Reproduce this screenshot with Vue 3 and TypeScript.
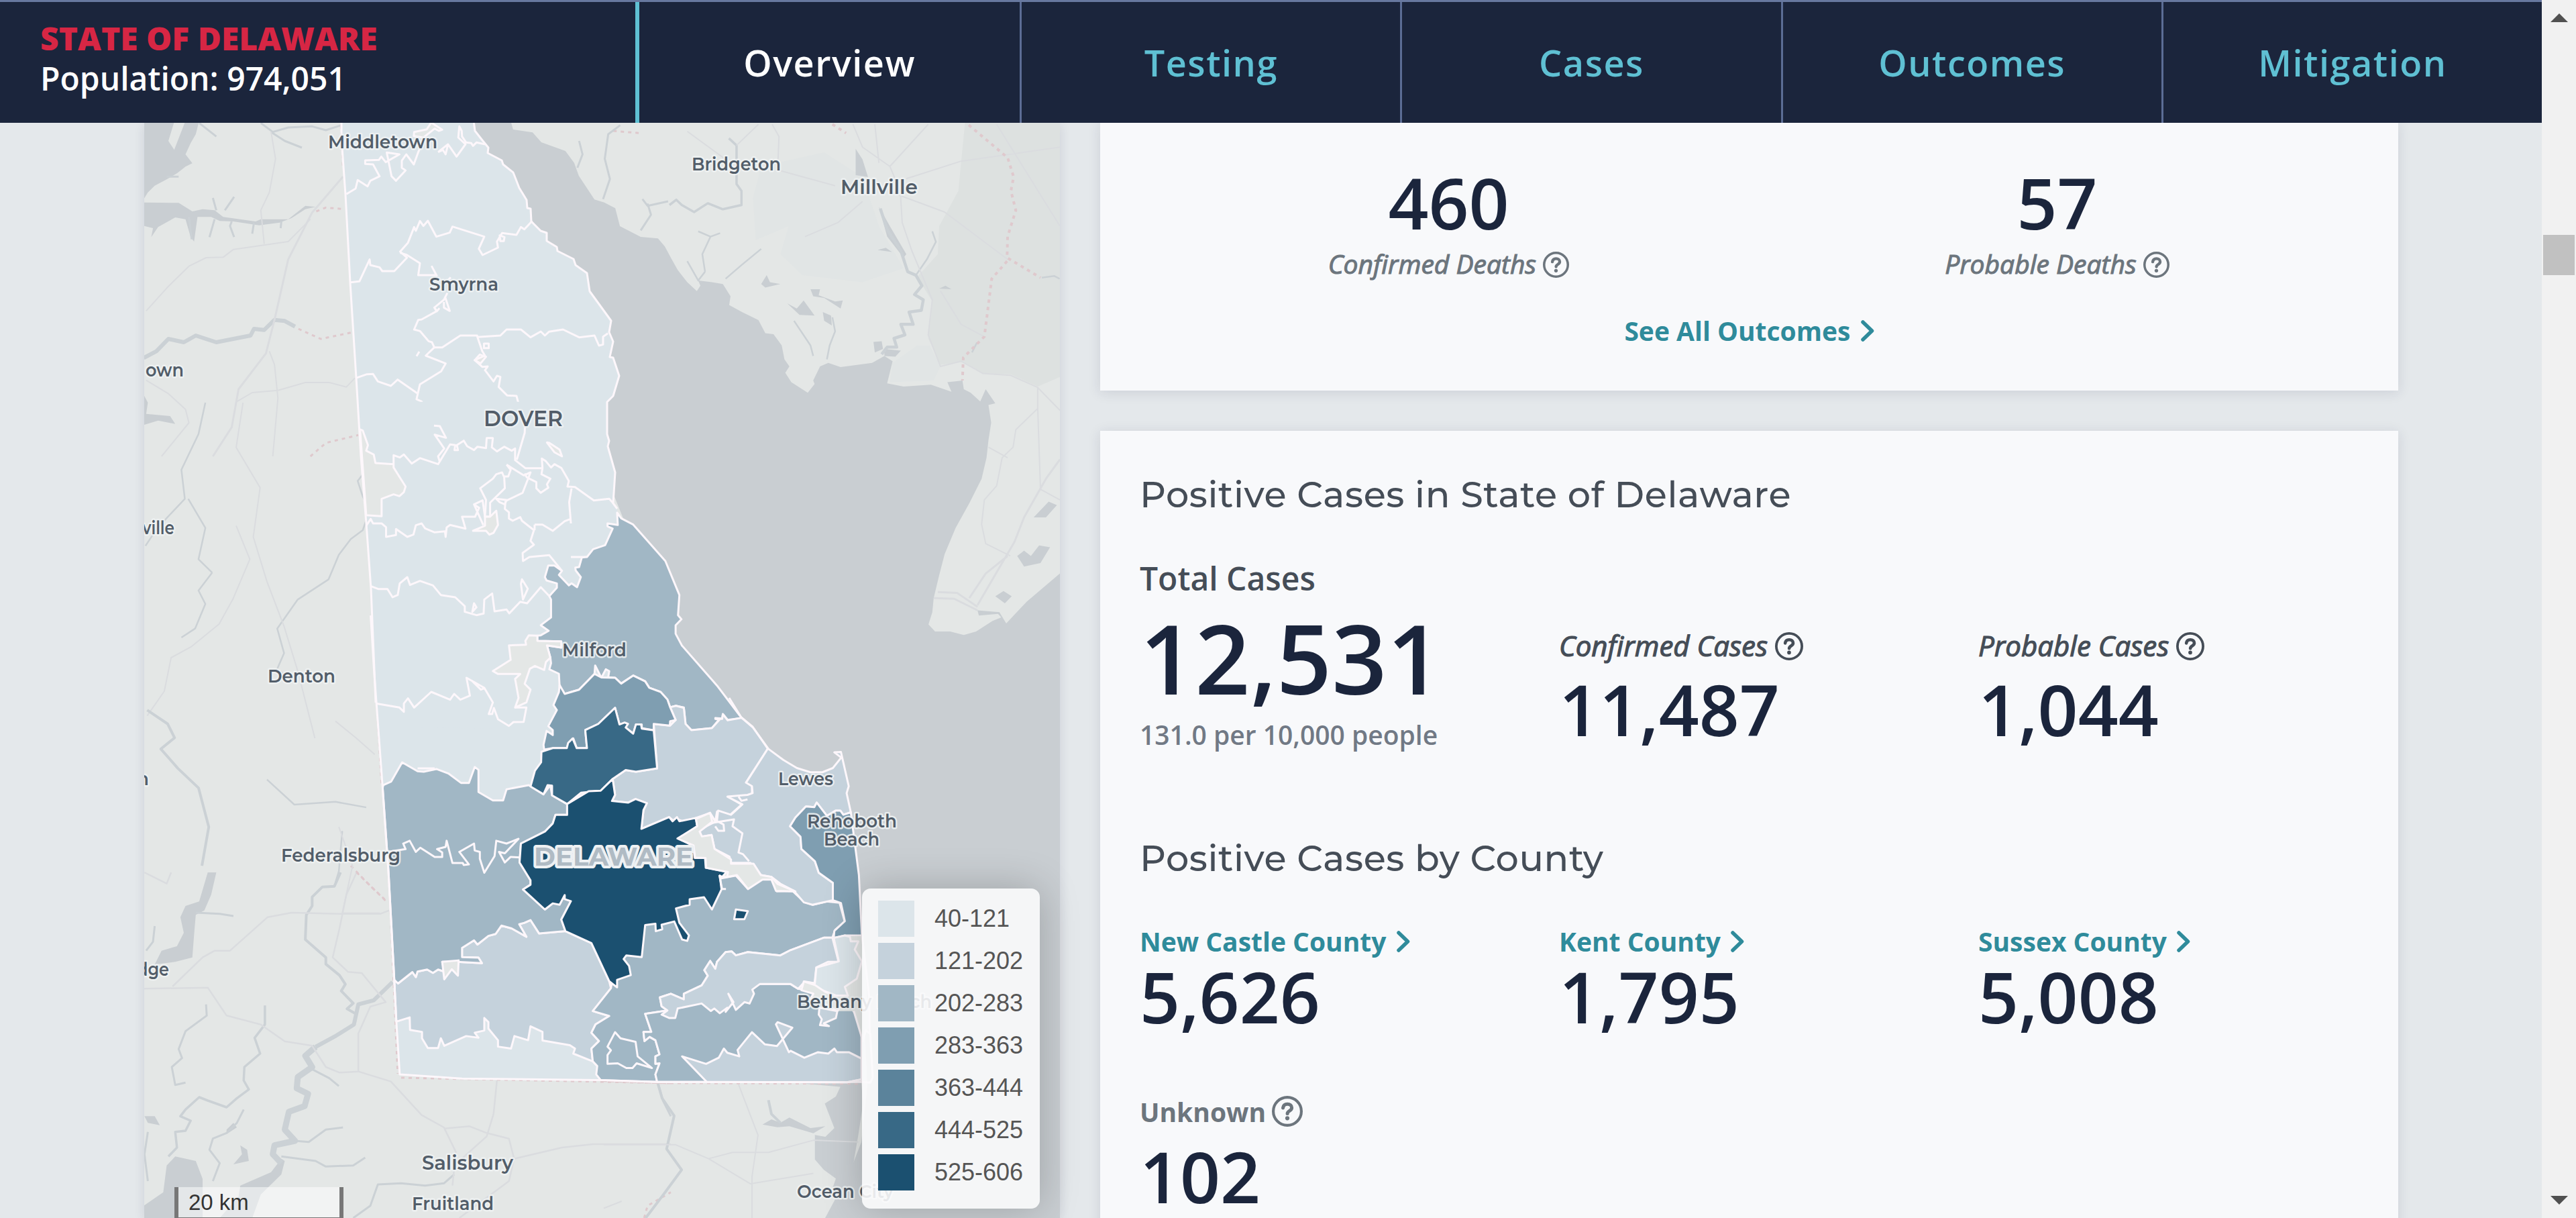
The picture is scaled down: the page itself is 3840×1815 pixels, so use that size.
<script setup lang="ts">
interface Shape { d: string; fill?: string; line?: boolean }
interface Sheet { frame: string; shapes: Shape[] }
interface Label { text: string; x: number; y: number; w?: number; size: number; kind?: string; end?: boolean }
interface Way { d: string; w: number; kind: string }

const tabs = ['Overview', 'Testing', 'Cases', 'Outcomes', 'Mitigation']

const scale = ['#dce5ea', '#c5d2dc', '#a1b7c5', '#7f9eb1', '#5b839b', '#386986', '#1b5070']
const [c1, c2, c3, c4, , c6, c7] = scale
const land = '#e4e7e6'
const ranges = ['40-121', '121-202', '202-283', '283-363', '363-444', '444-525', '525-606']
const legend = ranges.map((label, i) => ({ label, color: scale[i] }))

const counties = [
  { name: 'New Castle County', value: '5,626' },
  { name: 'Kent County', value: '1,795' },
  { name: 'Sussex County', value: '5,008' },
]

// Each map sheet is digitised on its own grid and placed with one transform.
const north = 'translate(200 180) scale(.510204 .333333)'
const central = 'translate(500 600) scale(.510204 .333333)'
const south = 'translate(500 1000) scale(.510204 .414541)'
const coast = 'translate(900 1000) scale(.446429 .519770)'
const west = 'translate(200 1300) scale(.510204 .333333)'
const jersey = 'translate(1000 180) scale(.408163 .522959)'

const water: Sheet[] = [
  { frame: north, shapes: [
    { d: 'M28 0L118 0 100 90 117 130 150 0 190 0 180 60 165 100 150 150 170 190 150 205 125 235 95 262 60 290 40 320 28 350ZM28 365L130 367 170 405 200 395 235 400 260 430 355 450 370 440 450 440 500 380 530 385 500 395 460 435 425 455 365 467 290 450 250 448 225 430 185 430 175 540 165 520 150 440 120 432 70 475 50 520 55 480 28 470Z' },
    { d: 'M28 1225L40 1260 35 1310 105 1320 120 1355 70 1340 28 1360Z' },
  ] },
  { frame: west, shapes: [
    { d: 'M215 0L240 0 225 100 205 170 180 190 175 280 170 380 120 400 60 412 80 350 125 330 145 270 135 200 150 150 190 130Z' },
    { d: 'M120 1270L180 1290 200 1370 200 1545 28 1545 28 1490 85 1430 95 1310Z' },
    { d: 'M310 1400L400 1340 430 1280 440 1290 430 1350 370 1440 345 1545 250 1545 305 1450Z' },
    { d: 'M270 1150L290 1120 300 1140 270 1170ZM310 1220L330 1240 335 1290 290 1305 315 1260ZM30 1090L60 1090 75 1130 40 1120Z' },
  ] },
  { frame: coast, shapes: [
    { d: 'M655 1182L790 1192 775 1220 738 1240 770 1310 740 1335 705 1330 705 1400 735 1430 775 1455 765 1480 790 1510 830 1430 850 1330 866 1240 860 1180Z' },
    { d: 'M530 1300L560 1285 590 1295 620 1280 690 1310 740 1305 700 1325 620 1305 580 1308Z' },
  ] },
  { frame: jersey, shapes: [
    { d: 'M675 80L700 110 720 160 675 155ZM760 245L800 300 860 380 850 390 790 330ZM330 465L350 440 362 460 400 465 345 475ZM425 520L460 535 485 512 525 555 470 553ZM510 480L545 480 540 497 600 515 628 512 620 535 560 505 520 500ZM555 545L585 555 588 583 560 570ZM740 630L770 628 775 650 745 660ZM780 650L840 655 820 672 780 670ZM755 368L785 362 808 374ZM980 478L1003 470 1025 480 1000 479ZM1325 1130L1380 1085 1410 1095 1370 1130ZM1265 1240L1290 1225 1315 1240 1345 1210 1385 1215 1350 1260 1290 1270ZM1185 1355L1215 1340 1245 1355 1220 1375Z' },
  ] },
]

const ways: { frame: string; items: Way[] }[] = [
  { frame: north, items: [
    { d: 'M28 1060L65 1030 100 975 145 990 180 960 240 990 340 960 350 930 380 935 410 890 440 895 470 920', w: 6, kind: 'river' },
    { d: 'M190 10L240 70M370 10L405 50 450 30 520 25 560 42 605 20M400 50L440 90 490 120M240 400L230 345M265 400L292 340M160 430L168 530M235 440L220 520M285 450L280 470 292 520M350 455L345 505M430 450L428 480M95 250L130 250', w: 3, kind: 'river' },
    { d: 'M610 250L520 410 450 620 410 890 385 1040 305 1200 285 1370 230 1500', w: 3, kind: 'road' },
    { d: 'M400 50L413 170 395 320 370 400 380 550M515 440L450 540 290 575 260 610 210 612 160 650 100 740 35 850M395 1030L410 1090 420 1240 405 1500M35 1160L100 1220 150 1290 160 1350 80 1500M300 1255L345 1215 420 1205 500 1170 570 1170 620 1190 645 1150', w: 2, kind: 'road' },
    { d: 'M532 405L560 388 615 395M480 930L545 975 640 945M515 1500L560 1440 655 1405M604 20L610 200M1400 45L1475 55', w: 3, kind: 'border' },
    { d: 'M1420 20L1385 60 1375 170 1390 260 1370 350M1300 90L1310 150 1295 210M1485 350L1500 380 1560 360M1480 490L1510 420 1500 370', w: 3, kind: 'river' },
  ] },
  { frame: central, items: [
    { d: 'M80 250L95 290 65 350 80 420 100 480 80 570 45 610 10 680 -20 790 -110 880 -170 1010 -150 1120 -170 1190 -120 1250', w: 2.5, kind: 'river' },
    { d: 'M-290 550L-250 700 -300 880 -340 990 -420 1090 -480 1140 -500 1290 -550 1400', w: 2, kind: 'road' },
    { d: 'M-380 0L-400 140 -450 300 -440 430 -520 560 -555 640M-430 430L-380 560 -400 700 -360 760M-360 760L-400 840 -380 900 -410 1010 -450 1050', w: 2.5, kind: 'river' },
    { d: 'M-270 0L-290 200 -220 380 -240 600 -200 800 -150 1000 -110 1200 -60 1500', w: 2, kind: 'road' },
  ] },
  { frame: south, items: [
    { d: 'M-550 140L-490 190 -470 240 -510 280 -460 350 -400 420 -370 560 -390 700', w: 4, kind: 'river' },
    { d: 'M20 575L10 720 0 760M-200 390L-120 480 0 470 90 490', w: 2.5, kind: 'river' },
    { d: 'M45 700L100 770 152 830M120 100L135 410', w: 3, kind: 'border' },
    { d: 'M0 180L60 240 115 300M20 870L130 870M20 870L50 700 10 560', w: 2, kind: 'road' },
  ] },
  { frame: west, items: [
    { d: 'M755 490L700 572 655 590 642 680 590 730 530 780', w: 6, kind: 'river' },
    { d: 'M530 780L500 820 520 870 478 915 475 965 508 990 498 1045 452 1070 440 1150 470 1200 410 1220 405 1260 430 1300', w: 9, kind: 'river' },
    { d: 'M603 0L585 62 550 65 520 110 520 150 503 190 500 300 560 380 560 410 600 460 617 500 605 530 640 585 622 610 645 630', w: 4, kind: 'river' },
    { d: 'M382 595L382 680 352 740 368 810 322 870 320 930 335 970 300 1010 270 1050 215 1020 190 1005 150 1060 135 1090 165 1110 150 1155 120 1160 125 1230 100 1270', w: 3.5, kind: 'river' },
    { d: 'M210 590L212 640 150 710 130 790 140 830 110 870 120 950 150 940M520 880L570 920 598 955M470 1200L510 1205 560 1150 610 1140M430 1270L530 1290 560 1315 640 1310 675 1275M640 1545L690 1490 712 1395 780 1390 850 1400 905 1390 935 1350M320 1060L300 1120 270 1165 230 1190 220 1240 250 1300 230 1380M180 180L250 185 290 195M60 240L55 310 35 350M40 1160L30 1260 40 1380M1530 940L1545 1020 1568 1090', w: 3, kind: 'river' },
    { d: 'M30 0L95 50 108 0M28 520L215 515 270 640 370 680 440 755 520 775 560 870 600 895 655 890 750 935 840 1085 905 1140 940 1250 930 1400M112 510L200 380 235 350 280 350 390 200 460 180 600 185 720 185 745 170M650 0L620 100 600 250 580 380 625 445 665 450 735 580 690 600 655 720 655 890M905 1145L980 1135 1030 1165 1095 1190 1110 1280 1095 1380 950 1545M1060 930L1050 1080 1030 1180 950 1290M1110 1280L1250 1230 1340 1215 1568 1215', w: 2.5, kind: 'road' },
    { d: 'M650 0L740 135M780 918L1568 942M1490 1545L1500 1490 1568 1430M745 40L770 900', w: 3, kind: 'border' },
  ] },
  { frame: coast, items: [
    { d: 'M180 1180L195 1225 235 1275 210 1370 260 1430 200 1500 140 1568M550 1230L560 1270 590 1295', w: 4, kind: 'river' },
    { d: 'M0 1358L240 1358 350 1398 490 1470 700 1440M450 1185L515 1330 495 1450 495 1568M350 1398L430 1380 550 1380 700 1345 850 1350M0 1540L60 1520', w: 2, kind: 'road' },
    { d: 'M0 1176L200 1182 860 1184', w: 2, kind: 'border' },
  ] },
  { frame: jersey, items: [
    { d: 'M765 250L790 310 840 370 865 430 895 440 917 470 890 495 922 510 915 540 870 545 885 580 840 580 855 610 815 620 825 645 790 645 770 665', w: 4.5, kind: 'river' },
    { d: 'M-5 240L20 225 40 240 85 260 135 235 190 252 258 240 258 200 240 180 240 70 212 50', w: 3.5, kind: 'river' },
    { d: 'M125 430L115 380 145 330 100 315M145 330L180 320M125 430L100 455 60 400M200 450L260 410 330 365M895 440L935 395 968 345 955 315M570 680L580 640 600 600 590 560M450 570L510 640 520 670M1100 660L1118 632M1355 447L1400 442 1420 450', w: 2.5, kind: 'river' },
    { d: 'M665 10L700 75 800 130 838 200 845 290 880 370M745 10L760 120M940 10L800 130M320 10L240 70M60 30L200 110M370 10L395 45 390 140 600 185M810 205L1000 260 1230 395M880 370L955 510 940 610 985 700 1060 685 1140 720 1240 725 1340 760 1340 820 1260 880 1250 930 1210 960 1190 1040 1145 1080 1135 1150 1150 1205 1240 1240M985 485L1060 580 1145 615M700 230L610 290 490 330M1190 10L1421 300M860 165L1060 115 1421 75M1340 760L1421 825M1340 820L1350 1050 1421 1080M1160 930L1230 960', w: 2, kind: 'road' },
    { d: 'M1421 965L1370 1020 1290 1130 1255 1200 1180 1300 1120 1380M975 1343L1045 1345 1120 1385M960 1360L1035 1362 1120 1395M1230 1240L1150 1290 1090 1360', w: 3, kind: 'road' },
    { d: 'M1088 12L1230 105 1252 160 1242 200 1260 255 1230 330 1228 390 1350 447M1228 400L1172 450 1145 615 1068 675 1065 740M590 10L640 35', w: 4, kind: 'border' },
  ] },
]

const forests = 'M1075 0L1421 0 1421 730 1340 757 1240 722 1140 720 1070 687 985 695 940 620 955 515 900 445 975 380 980 300 1050 200Z'
const marshes = 'M330 130L560 90 700 160 760 300 850 420 700 460 480 440 400 380 430 300 310 340 300 220ZM810 690L900 640 945 640 985 700 960 740 800 745Z'

const zips: Sheet[] = [
  { frame: north, shapes: [
    { fill: c1, d: 'M607 0L606 20 610 80 618 330 632 722 648 1150 664 1520 1392 1520 1383 1455 1387 1430 1382 1400 1382 1258 1399 1230 1417 1140 1399 1060 1390 1055 1400 988 1388 945 1394 895 1330 762 1323 680 1290 645 1283 618 1237 583 1235 565 1206 538 1204 500 1188 492 1163 448 1159 450 1158 393 1148 390 1147 355 1125 300 1112 245 1107 232 1077 195 1075 178 1032 145 1035 120 1017 88 995 45 990 0' },
    { line: true, d: 'M620 328L647 303 653 265 682 293 690 268 717 248 698 195 675 193 675 177 715 175 722 160 735 185 775 150 738 142 752 248 765 268 793 222 782 210 782 178 795 150 817 195 830 140 850 75M888 140L917 105 942 160 968 105 947 75 950 25 957 45 958 70 970 97 985 100 990 112 1000 97 1025 105M888 140L902 130 910 150 917 105' },
    { fill: land, line: true, d: 'M868 8L900 40 890 45 878 35 845 75 817 68 818 50 855 38ZM1010 1045L1028 1055 1012 1085 995 1070Z' },
    { line: true, d: 'M632 722L658 718 688 620 690 645 717 655 725 672 760 672 797 612 777 585 800 545 818 475 823 492 835 448 845 470 858 447 883 518 922 500 930 473 1023 518 1007 572 1018 600 1063 567 1060 540 1075 502 1117 510 1130 475 1140 485 1163 448M1068 512L1082 520 1080 538 1070 538Z' },
    { line: true, d: 'M777 590L797 600 835 637 830 690 883 690 870 652 885 695M925 700L905 730M915 770L905 800 877 835 885 850 840 888 830 890 818 933 835 940 860 985 870 990 877 1013 852 1050 910 1085 897 1120 835 1178 825 1245 840 1255 877 1365 895 1365 912 1415 877 1403 905 1465 888 1500M908 785L922 850 905 835 905 810M877 835L884 852 892 838' },
    { line: true, d: 'M877 1013L900 1013 953 960 1002 960 1003 967 1070 960 1088 933 1130 933 1158 968 1188 942 1200 960 1212 943 1253 933 1300 968 1345 960 1358 1005 1370 1000 1370 965 1384 950M1003 967L1017 1030 1025 1050 995 1070 1017 1100 1033 1098 1025 1115 1050 1165 1060 1140 1070 1145 1065 1190 1090 1228 1117 1230 1140 1360 1140 1400 1118 1510M648 1150L680 1133 698 1132 712 1165 750 1185 770 1157 827 1218M825 1052L833 1032M1022 996h14v20h-14z' },
  ] },
  { frame: central, shapes: [
    { fill: c1, d: 'M65 -4L72 120 90 540 103 830 118 1340 126 1504 700 1504 900 1200 823 492 823 473 812 450 818 312 795 200 799 165 796 140 796 -4' },
    { fill: land, line: true, d: 'M72 120L80 125 95 190 90 215 112 232 117 270 170 275 170 290 205 375 200 400 187 418 170 410 135 430 135 508 90 503Z' },
    { line: true, d: 'M170 275L170 235 188 245 200 232 223 272 247 248 300 275 335 187 350 190 348 212 358 212 355 190 375 170 385 195 405 212 415 197 440 203 442 158 460 158 457 200 472 218 493 197 515 215 525 205 525 257 555 293 605 293 603 250 615 262 630 290 640 275 660 292 682 350 678 375 700 377 755 437 800 430 812 450M288 103L305 105 323 157 290 143 318 205 300 240 305 265M554 100L553 135 530 255' },
    { fill: land, line: true, d: 'M618 178L625 180 655 210 662 240 640 222Z' },
    { line: true, d: 'M500 277L550 325 570 312 547 403 497 440 495 475 507 490 507 518 518 528 540 512 545 528 580 570 570 618 580 635 547 672 548 708 567 690 625 682 662 752M500 277L512 300 505 330 492 330 487 312 470 320 460 340 423 383 440 435 437 510 452 510 452 447 495 383 493 330M470 430L500 435 495 455 480 445ZM605 293L602 320 628 340 618 365 622 380 600 403 587 383 587 355 560 335 552 318' },
    { line: true, d: 'M90 550L103 520 110 540 135 540 148 557 148 600 177 592 177 565 210 600 228 590 235 548 252 540 262 562 290 580 320 575 322 600 325 558 335 547 380 563 370 510 408 510 420 470 405 455 430 437 437 510M405 455L432 547M582 545L605 545 635 573 670 530 687 520 683 445 690 383M688 540L687 520M582 545L582 570M688 690L735 690' },
    { fill: land, line: true, d: 'M437 510L452 510 470 483 475 547 462 582 450 590 440 573 402 573 437 550Z' },
    { line: true, d: 'M103 820L125 833 152 833 167 870 182 860 188 808 210 780 218 815 247 797 285 817 308 860 350 870 378 910 378 935 412 950 433 943 435 880 458 853 465 933 500 925 508 942 540 890 560 897 600 825 625 865M545 790L562 832 548 880 542 810ZM405 897L412 915 400 935Z' },
    { line: true, d: 'M118 1345L187 1363 200 1382 200 1345 212 1322 230 1363 280 1293 335 1328 347 1302 365 1328 393 1310 383 1230 435 1275 460 1340 448 1392 458 1392 463 1365 475 1415 507 1445 520 1428 550 1427 558 1363 525 1363M398 1242L425 1283 435 1277' },
    { fill: c3, line: true, d: 'M823 492L825 547 795 540 795 553 810 563 788 637 753 655 735 690 720 692 712 735 701 737 702 750 717 780 706 825 690 808 682 817 653 770 662 752 640 728 622 728 612 780 617 795 647 808 647 827 625 865 630 880 630 960 600 995 623 1020 600 1040 590 1042 590 1065 660 1067 660 1095 618 1085 628 1140 630 1165 625 1192 653 1212 655 1268 670 1302 712 1283 757 1213 759 1175 777 1230 790 1192 800 1200 797 1228 817 1230 835 1255 870 1220 905 1245 917 1275 950 1293 970 1328 978 1362 995 1355 1018 1363 1023 1437 1040 1465 1100 1455 1122 1415 1110 1410 1130 1412 1132 1392 1146 1418 1187 1410 1115 1265 1012 1085 994 1033 994 995 1011 968 1001 950 1005 860 964 708 870 545 835 517Z' },
    { fill: land, line: true, d: 'M565 1040L590 1042 590 1065 660 1067 660 1095 618 1085 628 1140 615 1160 610 1195 583 1177 568 1190 553 1257 570 1283 558 1340 525 1363 535 1320 525 1235 540 1213 475 1213 460 1200 512 1150 507 1085 557 1082 555 1065Z' },
  ] },
  { frame: south, shapes: [
    { fill: c1, d: 'M124 200L138 420 155 720 172 1110 178 1260 188 1450 370 1465 770 1470 700 1000 610 210Z' },
    { fill: c2, line: true, d: 'M172 1110L183 1123 225 1082 235 1100 240 1080 268 1073 285 1085 300 1073 318 1080 312 1045 355 1045 428 1050 418 1030 370 1028 370 995 405 968 415 983 447 952 468 945 485 915 515 925 558 955 537 910 552 905 570 895 595 943 672 935 748 978 800 1115 805 1140 752 1222 800 1240 760 1270 748 1300 770 1330 748 1357 752 1403 695 1375 700 1357 685 1345 605 1328 605 1297 570 1277 563 1327 523 1312 513 1357 475 1350 475 1327 447 1285 447 1262 435 1247 435 1292 407 1300 418 1318 382 1312 318 1347 308 1320 300 1355 270 1355 253 1320 253 1297 218 1290 217 1245 178 1260Z' },
    { fill: c3, line: true, d: 'M138 420L140 410 163 397 195 328 240 360 258 362 295 352 330 368 367 402 390 402 407 345 418 355 418 435 460 465 490 465 500 425 565 410 608 443 628 410 633 447 677 478 677 517 643 517 635 548 612 577 542 620 538 688 570 752 570 768 548 785 612 857 635 835 670 805 688 827 660 893 672 935 595 943 570 895 552 905 537 910 558 955 515 925 485 915 468 945 447 952 415 983 405 968 370 995 370 1028 418 1030 428 1050 355 1045 312 1045 318 1080 300 1073 285 1085 268 1073 240 1080 235 1100 225 1082 183 1123 172 1110 155 720Z' },
    { line: true, d: 'M152 650L205 640 198 620 217 610 235 650 248 635 290 668 312 668 312 652 297 640 322 632 325 610 342 690 372 690 375 697 390 695 362 650 405 620 407 645 422 650 422 675 435 725 465 665 470 610 500 620 535 603 495 655 478 650 495 688 512 668 540 670M240 350L290 350' },
    { fill: land, line: true, d: 'M312 1045L360 1040 358 1095 340 1072 318 1108Z' },
    { fill: c3, line: true, d: 'M1128 745L1170 735 1205 783 1250 745 1275 748 1290 792 1335 790 1370 830 1395 840 1435 828 1473 833 1488 900 1460 930 1452 958 1428 958 1330 1003 1300 1022 1205 1010 1170 1022 1158 1008 1140 1010 1115 1045 1110 1070 1095 1042 1078 1075 1088 1095 1070 1130 1018 1160 1018 1180 980 1160 948 1173 953 1205 970 1220 905 1232 923 1297 900 1297 903 1330 918 1315 935 1327 947 1378 935 1385 935 1412 947 1410 935 1450 940 1477 775 1470 762 1450 765 1420 752 1403 748 1357 770 1330 748 1300 760 1270 800 1240 752 1222 805 1140 820 1040 870 900 1000 800Z' },
    { line: true, d: 'M817 1298L795 1350 805 1363 795 1380 795 1412 825 1410 850 1427 868 1427 880 1410 925 1427 883 1385 877 1333 833 1320Z' },
    { fill: c3, line: true, d: 'M970 1220L905 1232 923 1297 900 1297 903 1330 918 1315 935 1327 947 1378 935 1385 935 1412 947 1410 935 1450 940 1477 1537 1477 1537 1300 1530 1250 1500 1200 1400 1150 1352 1142 1330 1125 1240 1125Z' },
    { fill: c2, line: true, d: 'M1428 958L1452 958 1470 1045 1440 1045 1405 1065 1400 1122 1370 1118 1352 1142 1330 1125 1240 1125 1218 1145 1223 1160 1210 1195 1195 1190 1170 1218 1148 1160 1163 1190 1140 1225 1145 1210 1123 1230 1107 1213 1097 1222 1070 1195 1000 1213 993 1247 975 1247 953 1235 970 1220 953 1205 948 1173 980 1160 1018 1180 1018 1160 1070 1130 1088 1095 1078 1075 1095 1042 1110 1070 1115 1045 1140 1010 1158 1008 1170 1022 1205 1010 1300 1022 1330 1003Z' },
    { fill: c2, line: true, d: 'M1013 1385L1083 1412 1120 1390 1135 1357 1145 1372 1180 1385 1175 1362 1217 1298 1255 1342 1290 1348 1335 1282 1292 1262 1287 1270 1325 1370 1330 1365 1370 1390 1410 1370 1440 1375 1458 1357 1465 1370 1500 1370 1537 1393 1537 1468 1495 1478 1085 1477Z' },
    { fill: c2, line: true, d: 'M930 190L978 196 994 176 978 130 995 125 1018 132 1023 190 1040 212 1100 205 1122 175 1110 172 1130 172 1132 155 1146 177 1187 168 1220 203 1264 278 1200 400 1217 412 1217 440 1195 465 1148 452 1187 480 1153 517 1115 505 1110 540 1095 510 1053 528 1015 540 1005 535 990 540 975 525 894 567 900 500 910 475 877 460 855 473 808 467 817 445 810 388 848 356 878 362 940 350Z' },
    { fill: c4, line: true, d: 'M655 50L670 82 712 67 757 10 777 23 817 24 835 45 870 16 905 37 917 60 950 75 970 102 978 130 994 176 978 180 977 196 930 190 930 213 895 205 895 192 878 192 870 225 848 203 850 190 830 192 817 132 768 190 730 212 735 277 705 277 695 242 683 258 676 277 635 277 610 282 608 265 617 215 635 230 635 212 622 198 647 140 637 122 653 75Z' },
    { fill: c6, line: true, d: 'M817 132L830 192 845 185 855 190 848 203 870 225 878 192 893 192 895 207 930 213 940 350 878 362 848 356 810 388 775 430 718 437 677 478 633 447 633 412 620 410 608 443 570 415 583 358 601 328 602 290 635 277 676 277 680 258 693 242 705 277 735 277 730 212 768 190Z' },
    { fill: c7, line: true, d: 'M810 388L817 445 808 467 855 473 877 460 910 475 900 500 894 567 975 525 985 540 998 525 1005 540 1053 528 1057 558 1003 602 1045 628 1050 672 1080 672 1082 707 1143 722 1130 740 1123 735 1128 785 1100 857 1077 813 1035 820 1035 840 995 853 1005 905 1033 950 1028 970 1013 965 990 900 953 912 955 928 936 935 935 908 905 913 895 1028 850 1022 842 1035 858 1060 863 1093 823 1110 823 1137 800 1115 748 978 672 935 660 893 688 827 670 820 670 805 655 840 635 835 612 857 548 785 570 768 570 752 538 688 542 620 612 577 635 548 643 517 677 517 677 478 740 432 775 430ZM1170 857L1205 863 1195 892 1165 892Z' },
    { line: true, d: 'M103 -200L113 0 120 118 138 420 155 720 172 1110 178 1260 188 1450 370 1465 770 1470 940 1477 1085 1477 1495 1478 1537 1468' },
  ] },
  { frame: coast, shapes: [
    { fill: c2, line: true, d: 'M548 222L600 255 645 278 690 290 730 290 765 278 793 248 770 233 792 232 818 330 811 350 825 405 800 412 790 400 775 400 745 415 711 377 703 390 675 388 640 420 622 445 657 475 660 510 705 545 718 578 765 607 765 657 697 670 668 663 635 630 590 610 560 590 525 585 490 550 425 550 420 532 370 510 360 470 325 475 320 455 365 435 378 430 382 400 425 412 463 382 413 360 480 355 497 350 495 330 475 320Z' },
    { fill: land, line: true, d: 'M308 424L355 406 362 432 320 460 328 474 360 470 370 510 425 540 425 552 500 552 525 585 560 590 580 610 640 632 575 630 560 598 530 598 482 625 445 585 412 590 415 576 342 564 340 536 305 535 300 500 246 480 312 445Z' },
    { line: true, d: 'M365 435L435 425 430 445 463 465 450 520 465 525 485 545M378 430L400 440 402 458 383 458 372 445M450 360L460 372 480 368M386 585L395 625 408 625 M395 590L412 590' },
    { fill: c4, line: true, d: 'M675 388L703 390 711 377 745 415 775 400 790 400 800 412 825 405 852 585 862 758 805 758 768 765 770 745 805 717 792 665 765 657 765 607 718 578 705 545 660 510 657 475 622 445 640 420Z' },
    { fill: land, d: 'M805 760L866 760 886 1020 862 1060 835 975 780 975 800 905Z' },
    { fill: c1, line: true, d: 'M768 765L805 758 822 762 825 775 850 775 838 798 862 832 845 882 805 905 815 930 790 935 730 915 690 910 668 905 670 890 705 895 710 850 785 832Z' },
    { fill: land, line: true, d: 'M668 890L705 900 740 920 770 930 815 930 780 975 730 950 690 940 700 925 660 915Z' },
    { fill: c2, line: true, d: 'M720 965L780 975 775 995 735 1010 752 1018 722 1015 728 998 718 985Z' },
    { line: true, d: 'M835 975L865 1060 875 1030 890 1040 898 1165 890 1180 860 1178M862 758L886 930 888 1040' },
  ] },
]

const coastline = 'M706 180L708 195 719 209 728 220 727 228 748 239 750 245 765 257 767 262 774 280 785 298 786 310 791 311 792 330 806 344 815 347 815 359 830 368 831 374 855 386 858 395 875 407 879 434 911 478 908 495 914 509 909 532 914 533 923 560 914 590 905 599 905 647 908 657 906 665 917 704 914 750 920 758'
const coastTail = 'M1087 1040L1105 1069 1122 1083 1144 1115'
const westLine = 'M509 183L509 207 515 290 522 421 531 563 538 680 546 780 553 877 560 1047'

const labels: Label[] = [
  { text: 'Middletown', x: 489, y: 221, w: 163, size: 27 },
  { text: 'Smyrna', x: 640, y: 433, w: 103, size: 28 },
  { text: 'DOVER', x: 721, y: 635, w: 118, size: 33 },
  { text: 'own', x: 217, y: 561, w: 57, size: 27 },
  { text: 'ville', x: 212, y: 796, w: 48, size: 27 },
  { text: 'n', x: 222, y: 1170, size: 27, end: true },
  { text: 'dge', x: 204, y: 1454, w: 48, size: 27 },
  { text: 'Denton', x: 399, y: 1017, w: 101, size: 27 },
  { text: 'Federalsburg', x: 419, y: 1284, w: 178, size: 27 },
  { text: 'Milford', x: 838, y: 978, w: 96, size: 28 },
  { text: 'Lewes', x: 1160, y: 1170, w: 82, size: 27 },
  { text: 'Rehoboth', x: 1203, y: 1233, w: 134, size: 27 },
  { text: 'Beach', x: 1228, y: 1260, w: 83, size: 27 },
  { text: 'Bethany Beach', x: 1188, y: 1502, w: 201, size: 27 },
  { text: 'Ocean City', x: 1188, y: 1785, w: 144, size: 27 },
  { text: 'Bridgeton', x: 1031, y: 254, w: 133, size: 28 },
  { text: 'Millville', x: 1253, y: 289, w: 115, size: 30 },
  { text: 'Salisbury', x: 629, y: 1743, w: 136, size: 30 },
  { text: 'Fruitland', x: 614, y: 1803, w: 122, size: 27 },
  { text: 'DELAWARE', x: 796, y: 1290, w: 237, size: 39, kind: 'state' },
]
</script>

<template>
  <div class="page">
    <div class="view">
      <header class="top">
        <div class="place">
          <div class="state-name">STATE OF DELAWARE</div>
          <div class="population">Population: 974,051</div>
        </div>
        <nav class="tabs">
          <a v-for="(t, i) in tabs" :key="t" class="tab" :class="{ active: i === 0 }">{{ t }}</a>
        </nav>
      </header>

      <main class="content">
        <section class="map">
          <svg class="map-art" viewBox="215 183 1365 1632" width="1365" height="1632">
            <rect x="215" y="183" width="1365" height="1632" fill="#c9ced2" />
            <path :fill="land" d="M215 183L700 183 760 330 820 500 900 700 980 900 1120 1150 1240 1200 1285 1450 1293 1618 1284 1702 1266 1748 1230 1815 215 1815Z" />
            <g :transform="jersey">
              <path :fill="land" d="M-585 0L-576 25 -505 33 -473 61 -385 86 -353 120 -336 157 -279 224 -243 233 -203 249 -186 300 -110 331 -47 335 -22 358 0 390 25 425 60 460 95 485 108 470 100 455 150 460 190 465 218 500 213 525 260 545 320 568 345 605 375 608 405 640 415 680 433 700 418 718 440 745 500 775 525 750 520 740 545 700 575 690 620 702 735 690 780 670 810 685 790 748 850 757 950 752 1025 772 1010 745 1045 742 1065 740 1070 765 1095 775 1130 800 1150 765 1185 805 1160 810 1170 860 1160 910 1153 960 1135 1020 1090 1090 1040 1160 1000 1235 980 1295 960 1360 955 1400 941 1435 965 1455 1020 1455 1070 1465 1115 1455 1175 1425 1207 1415 1195 1405 1125 1410 1120 1395 1200 1400 1225 1432 1300 1370 1421 1290 1421 0Z" />
              <path fill="#dde1e0" :d="forests" />
              <path fill="#e1e5e5" :d="marshes" />
            </g>
            <g v-for="(s, i) in water" :key="'w' + i" :transform="s.frame" fill="#c9ced2">
              <path v-for="(p, j) in s.shapes" :key="j" :d="p.d" />
            </g>
            <g v-for="(s, i) in ways" :key="'r' + i" :transform="s.frame">
              <path v-for="(p, j) in s.items" :key="j" :d="p.d" :class="['way', p.kind]" :stroke-width="p.w" />
            </g>
            <g v-for="(s, i) in zips" :key="'z' + i" :transform="s.frame">
              <path v-for="(p, j) in s.shapes" :key="j" :d="p.d" :fill="p.fill ?? 'none'" :class="{ edge: p.line }" />
            </g>
            <path class="edge" fill="none" :d="coastline" />
            <path class="edge" fill="none" :d="coastTail" />
            <path class="edge" fill="none" :d="westLine" />
            <text
              v-for="l in labels"
              :key="l.text"
              :x="l.x"
              :y="l.y"
              :font-size="l.size"
              :textLength="l.w"
              :text-anchor="l.end ? 'end' : 'start'"
              lengthAdjust="spacingAndGlyphs"
              :class="['label', l.kind]"
            >{{ l.text }}</text>
          </svg>

          <div class="scale-bar">20 km</div>
          <ul class="legend">
            <li v-for="row in legend" :key="row.label">
              <i :style="{ background: row.color }"></i>{{ row.label }}
            </li>
          </ul>
        </section>

        <section class="cards">
          <article class="card deaths">
            <div class="pair">
              <div v-for="d in [['460', 'Confirmed Deaths'], ['57', 'Probable Deaths']]" :key="d[1]">
                <div class="num">{{ d[0] }}</div>
                <div class="cap-sm">
                  {{ d[1] }}
                  <svg class="help" viewBox="0 0 40 40"><circle cx="20" cy="20" r="18.2" /><path d="M14.4 15.6c.5-3.4 2.8-4.9 5.7-4.9 3.2 0 5.6 1.9 5.6 4.7 0 4.400-5.600 3.700-5.600 7.700" /><circle class="dot" cx="20" cy="29" r="2.700" /></svg>
                </div>
              </div>
            </div>
            <a class="link center">See All Outcomes <svg class="chev" viewBox="0 0 20 32"><path d="M3 3L16.500 16 3 29" /></svg></a>
          </article>

          <article class="card cases">
            <h2>Positive Cases in State of Delaware</h2>
            <div class="triple totals">
              <div>
                <div class="total-cap">Total Cases</div>
                <div class="total">12,531</div>
                <div class="rate">131.0 per 10,000 people</div>
              </div>
              <div v-for="d in [['11,487', 'Confirmed Cases'], ['1,044', 'Probable Cases']]" :key="d[1]" class="sub">
                <div class="cap">
                  {{ d[1] }}
                  <svg class="help" viewBox="0 0 40 40"><circle cx="20" cy="20" r="18.2" /><path d="M14.4 15.6c.5-3.4 2.8-4.9 5.7-4.9 3.2 0 5.6 1.9 5.6 4.7 0 4.400-5.600 3.700-5.600 7.700" /><circle class="dot" cx="20" cy="29" r="2.700" /></svg>
                </div>
                <div class="num">{{ d[0] }}</div>
              </div>
            </div>
            <h2 class="by-county">Positive Cases by County</h2>
            <div class="triple counties">
              <div v-for="c in counties" :key="c.name">
                <a class="link">{{ c.name }} <svg class="chev" viewBox="0 0 20 32"><path d="M3 3L16.500 16 3 29" /></svg></a>
                <div class="num">{{ c.value }}</div>
              </div>
            </div>
            <div class="unknown">
              <div class="unknown-cap">
                Unknown
                <svg class="help" viewBox="0 0 40 40"><circle cx="20" cy="20" r="18.2" /><path d="M14.4 15.6c.5-3.4 2.8-4.9 5.7-4.9 3.2 0 5.6 1.9 5.6 4.7 0 4.400-5.600 3.700-5.600 7.700" /><circle class="dot" cx="20" cy="29" r="2.700" /></svg>
              </div>
              <div class="num">102</div>
            </div>
          </article>
        </section>
      </main>
    </div>

    <aside class="scrollbar">
      <svg width="26" height="13" viewBox="0 0 26 13"><path fill="#505050" d="M13 0L26 13H0Z" /></svg>
      <div class="thumb"></div>
      <svg class="down" width="26" height="13" viewBox="0 0 26 13"><path fill="#505050" d="M0 0H26L13 13Z" /></svg>
    </aside>
  </div>
</template>

<style>
body { margin: 0; overflow: hidden; }
</style>

<style scoped>
.page { display: flex; width: 3840px; height: 1815px; overflow: hidden; background: #e4e8eb; font-family: "Open Sans", "Noto Sans", sans-serif; font-weight: 600; }
.view { width: 3789px; height: 1815px; overflow: hidden; display: flex; flex-direction: column; }
.top { position: relative; z-index: 2; flex: none; box-sizing: border-box; height: 183px; border-top: 3px solid #67789f; background: #1b253c; display: flex; }
.place { box-sizing: border-box; width: 947px; padding: 24px 0 0 60px; font-size: 48px; line-height: 60px; color: #fff; }
.state-name { color: #d72644; font-weight: 800; }
.tabs { flex: 1; display: grid; grid-template-columns: repeat(5, 1fr); border-left: 6px solid #5fc0d3; }
.tab { display: flex; align-items: center; justify-content: center; box-sizing: border-box; border-left: 3px solid #5c6d95; color: #5fc0d3; font-size: 54px; letter-spacing: 1.5px; }
.tab.active { border-left: 0; color: #fff; }

.content { display: flex; gap: 60px; padding-left: 215px; height: 1632px; }
.map { position: relative; flex: none; width: 1365px; height: 1632px; box-shadow: 0 3px 15px rgba(30, 30, 70, .12); }
.map-art { display: block; }
.way { fill: none; vector-effect: non-scaling-stroke; stroke-linejoin: round; }
.river { stroke: #cbd1d5; }
.road { stroke: #dadcdf; }
.border { stroke: #dfc9cd; stroke-dasharray: 5 6; }
.edge { stroke: #fdf7fb; stroke-width: 3px; vector-effect: non-scaling-stroke; stroke-linejoin: round; }
.label { font-family: Montserrat, "Open Sans", sans-serif; font-weight: 600; fill: #525d69; stroke: rgba(240, 243, 244, .85); stroke-width: 5px; paint-order: stroke; stroke-linejoin: round; }
.state { fill: #b0bbc4; stroke: #eef1f3; stroke-width: 8px; font-weight: 700; }

.scale-bar { position: absolute; left: 45px; top: 1586px; box-sizing: border-box; width: 252px; height: 51px; border: 6px solid #777; border-top: 0; padding-left: 15px; background: rgba(255, 255, 255, .5); font: 400 33px/46px "Liberation Sans", Arial, sans-serif; color: #333; }
.legend { position: absolute; left: 1070px; top: 1141px; box-sizing: border-box; width: 265px; height: 477px; margin: 0; padding: 18px 0 0 24px; list-style: none; border-radius: 13px; background: rgba(250, 251, 252, .89); box-shadow: 0 0 60px rgba(0, 0, 0, .22); font: 400 36px/54px "Liberation Sans", Arial, sans-serif; color: #555; }
.legend li { display: flex; gap: 30px; height: 54px; margin-bottom: 9px; }
.legend i { width: 54px; height: 54px; }

.cards { width: 1935px; }
.card { box-sizing: border-box; width: 1935px; padding: 0 60px; background: #f8f9fb; box-shadow: 0 3px 18px rgba(30, 30, 70, .12); }
.deaths { height: 399px; padding-top: 59px; text-align: center; }
.cases { height: 1300px; margin-top: 60px; padding: 65px 60px 0 59px; }
.pair { display: grid; grid-template-columns: 907px 907px; padding-left: 6px; }
.num { font-size: 105px; line-height: 120px; color: #1b253c; }
.cap-sm { margin-top: 1px; font-size: 39px; line-height: 60px; font-style: italic; font-weight: 400; -webkit-text-stroke: 1.1px currentColor; color: #6c757d; }
.help { display: inline-block; width: 1em; height: 1em; vertical-align: -.15em; overflow: visible; fill: none; stroke: currentColor; stroke-width: 3.6; stroke-linecap: round; }
.help path { stroke-width: 4.4; }
.help .dot { fill: currentColor; stroke: none; }
.link { display: block; font-size: 39px; line-height: 60px; font-weight: 700; color: #2f8b9b; }
.center { margin-top: 40px; }
.chev { width: 20px; height: 32px; margin-left: 5px; vertical-align: -1px; fill: none; stroke: currentColor; stroke-width: 5.5; stroke-linecap: round; stroke-linejoin: round; }
h2 { margin: 0; font: 500 54px/60px Montserrat, Inter, sans-serif; letter-spacing: .6px; color: #454d57; }
.triple { display: grid; grid-template-columns: repeat(3, 625px); }
.totals { margin-top: 65px; }
.total-cap { font-size: 48px; line-height: 60px; color: #454d57; }
.total { margin-top: 7px; font-size: 144px; line-height: 160px; color: #1b253c; }
.rate { margin-top: 9px; font-size: 39px; line-height: 54px; color: #717985; }
.sub { padding-top: 100px; }
.cap { font-size: 42px; line-height: 60px; margin-bottom: 5px; font-style: italic; font-weight: 400; -webkit-text-stroke: 1.2px currentColor; color: #454d57; }
.by-county { margin-top: 127px; }
.counties { margin-top: 64px; }
.counties .num { margin-top: -8px; }
.unknown { margin-top: 82px; }
.unknown-cap { height: 60px; font-size: 39px; line-height: 60px; font-weight: 700; color: #6c757d; margin-bottom: 6px; }
.unknown-cap .help { width: 46px; height: 46px; margin-left: -1px; vertical-align: -7px; }

.scrollbar { box-sizing: border-box; width: 51px; height: 1815px; padding: 20px 0; background: #f1f1f1; display: flex; flex-direction: column; align-items: center; }
.thumb { width: 47px; height: 60px; margin-top: 317px; background: #c1c1c1; }
.down { margin-top: auto; }
</style>
